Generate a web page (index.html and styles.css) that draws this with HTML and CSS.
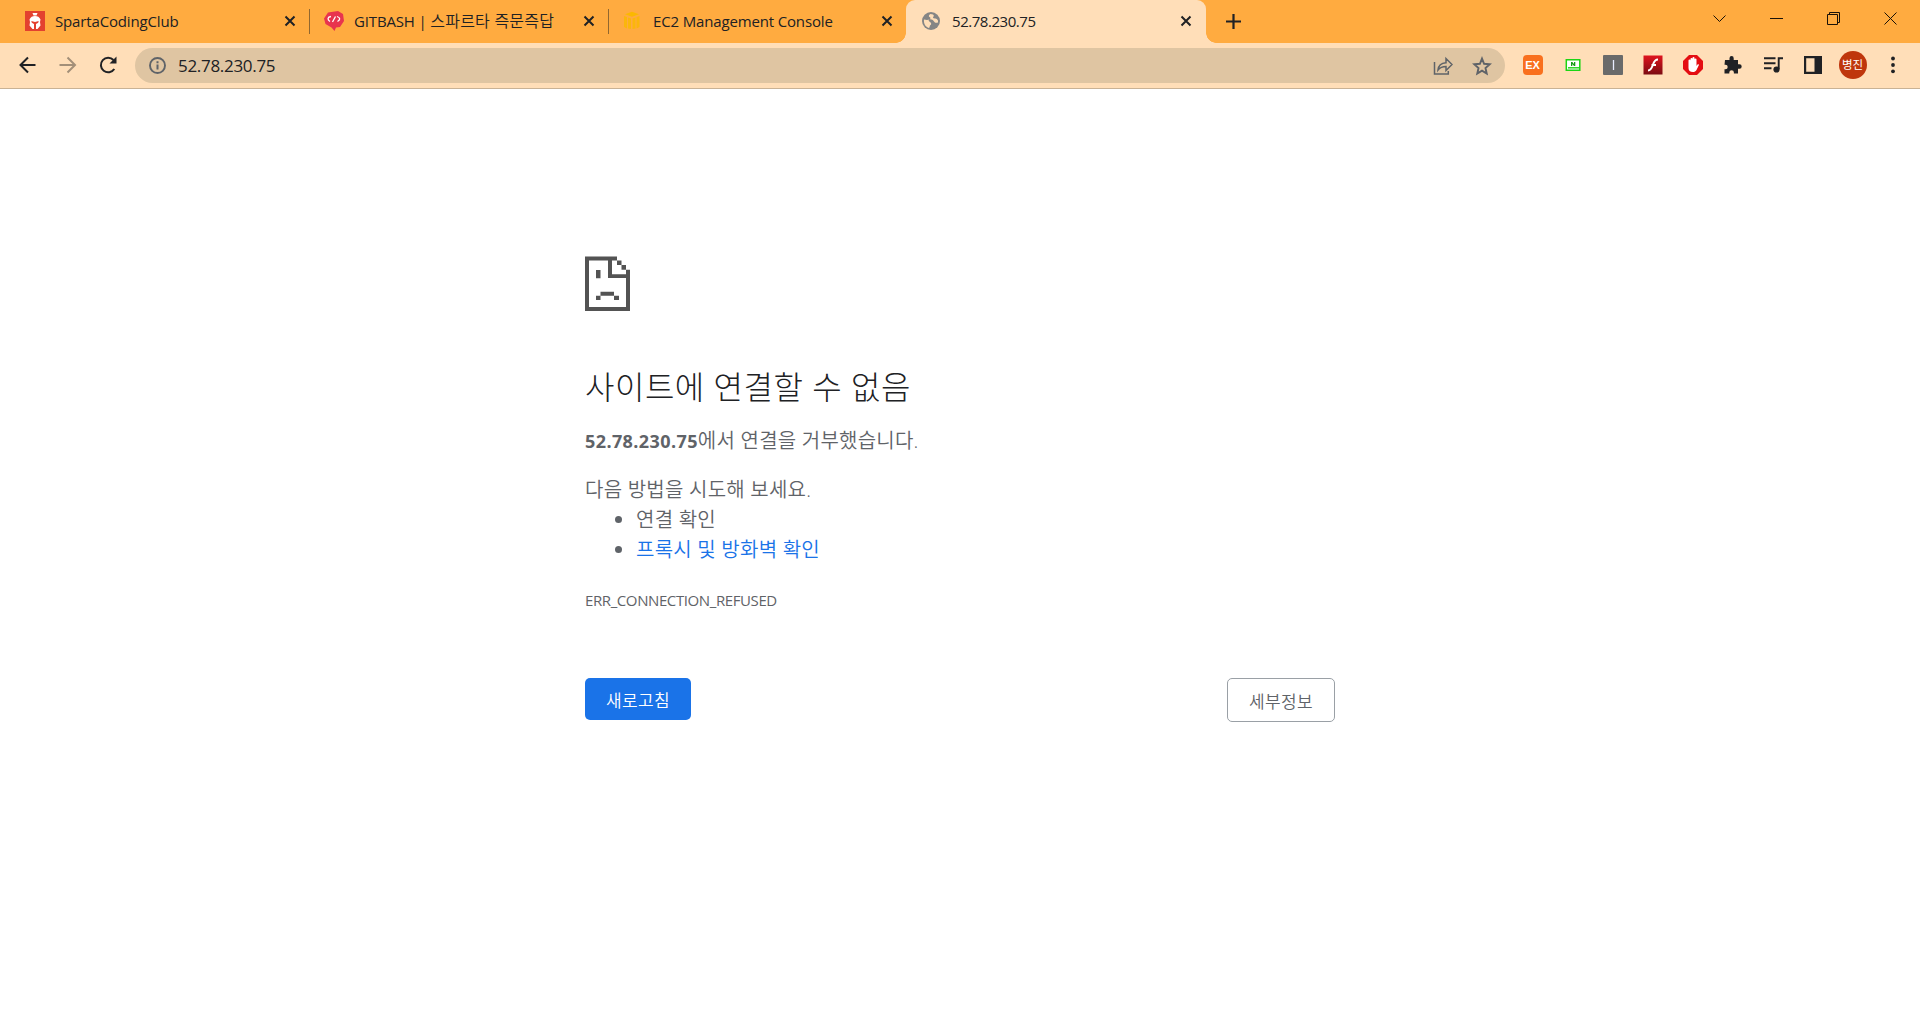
FILE: index.html
```html
<!DOCTYPE html>
<html lang="ko">
<head>
  <meta charset="UTF-8">
  <title>52.78.230.75</title>
  <link rel="stylesheet" href="styles.css">
</head>
<body>
  <header class="tab-strip">
    <div class="tab">
      <svg class="favicon" width="20" height="20" viewBox="0 0 20 20">
        <rect width="20" height="20" fill="#e3412f"/>
        <path d="M7.500 2h5l-1 2.500h-3z" fill="#fff"/>
        <path d="M4.500 8.500C5.500 6 7.500 5 10 5s4.500 1 5.500 3.500l-.5 2.500.5 3.500-3 3.500H7.500l-3-3.500L5 11z" fill="#fff"/>
        <path d="M6.300 10l3.700 1 3.700-1-.5 1.700-2.200 1.300v5H9v-5l-2.200-1.300z" fill="#e3412f"/>
      </svg>
      <span class="tab-title">SpartaCodingClub</span>
      <svg class="close" width="12" height="12" viewBox="0 0 12 12"><path d="M1.500 1.500l9 9M10.500 1.500l-9 9"/></svg>
    </div>
    <div class="tab">
      <svg class="favicon" width="20" height="20" viewBox="0 0 20 20">
        <path d="M4 1.500L14 0l5 3 1 7-4 6-4 .5-1.500 3.500-3-3.500L1.500 13 0 7.500z" fill="#e8344e"/>
        <path d="M7 5.500C3.500 6 3 8.500 6 10.500M13 5.500c3.500 1 3.500 3.500.5 5M11.500 5.500l-3 5.500" fill="none" stroke="#fff" stroke-width="1.300"/>
      </svg>
      <span class="tab-title">GITBASH | <span class="korean">스파르타 즉문즉답</span></span>
      <svg class="close" width="12" height="12" viewBox="0 0 12 12"><path d="M1.500 1.500l9 9M10.500 1.500l-9 9"/></svg>
    </div>
    <div class="tab last">
      <svg class="favicon" width="20" height="20" viewBox="0 0 20 20">
        <path d="M2 3.200l7-2.400 7 2.400-7 2.600z" fill="#fbb800"/>
        <path d="M1 5l3 1v11.500l-3-1.500zM5 6.500l3 1V18l-3-.5zM9.500 7.500l3-1v11l-3 .5zM13.500 6l3-1v11l-3 1.500z" fill="#fbb60c"/>
      </svg>
      <span class="tab-title">EC2 Management Console</span>
      <svg class="close" width="12" height="12" viewBox="0 0 12 12"><path d="M1.500 1.500l9 9M10.500 1.500l-9 9"/></svg>
    </div>
    <div class="tab active">
      <svg class="favicon" width="20" height="20" viewBox="0 0 20 20">
        <circle cx="9" cy="10" r="9" fill="#858585"/>
        <path d="M8.500 3c-2 1-2 2.500-1 3 1.500.5 1 2 0 2.500-1.500.5-3.500.5-5.500 0C1.500 12.500 3.500 16 7 17c1-1 .5-2.500 1.500-3s1-2-.5-3-2-2-.5-2.500 3.500.5 4.500 2 2 1.500 4 1c.5-3-1.500-4-3-4-2 0-2.500-1-1.500-2 .5-.8.300-1.500-.5-2z" fill="#ffdeb8"/>
      </svg>
      <span class="tab-title">52.78.230.75</span>
      <svg class="close" width="12" height="12" viewBox="0 0 12 12"><path d="M1.500 1.500l9 9M10.500 1.500l-9 9"/></svg>
    </div>
    <svg class="new-tab" width="15" height="15" viewBox="0 0 15 15"><path d="M7.500 0v15M0 7.500h15"/></svg>
    <div class="window-controls">
      <svg width="13" height="13" viewBox="0 0 13 13"><path d="M.5 3.500l6 6 6-6"/></svg>
      <svg width="13" height="13" viewBox="0 0 13 13"><path d="M0 6.500h13"/></svg>
      <svg width="13" height="13" viewBox="0 0 13 13"><path d="M.5 2.500h10v10H.5zM2.500 2.500v-2h10v10h-2"/></svg>
      <svg width="13" height="13" viewBox="0 0 13 13"><path d="M.5.5l12 12M12.500.5l-12 12"/></svg>
    </div>
  </header>

  <nav class="toolbar">
    <div class="nav-buttons">
      <svg width="20" height="20" viewBox="0 0 20 20"><path d="M17.500 10H3M10 2.500L2.500 10l7.500 7.500"/></svg>
      <svg class="disabled" width="20" height="20" viewBox="0 0 20 20"><path d="M1.500 10h15M9.500 2.500L17 10l-7.500 7.500"/></svg>
      <svg width="20" height="20" viewBox="0 0 20 20"><path d="M16.300 14A7.300 7.300 0 1 1 15.500 5"/><path d="M18.500 1.500v7h-7z" class="solid"/></svg>
    </div>
    <div class="omnibox">
      <svg width="17" height="17" viewBox="0 0 17 17">
        <circle cx="8.500" cy="8.500" r="7.500" fill="none" stroke="#5f6368" stroke-width="1.900"/>
        <path d="M7.500 7.500h2v5h-2zM7.500 4.200h2v2h-2z" fill="#5f6368"/>
      </svg>
      <span class="url">52.78.230.75</span>
      <svg class="share" width="20" height="20" viewBox="0 0 20 20">
        <path d="M1.500 6v12h13.800v-3M5 14c.4-4 3-7 8-7.300V2.500L19 8.500l-6 6v-4c-4 0-6 1-8 3.500z"/>
      </svg>
      <svg class="star" width="20" height="20" viewBox="0 0 20 20">
        <path d="M10 2.600l2.100 5.200 5.600.5-4.200 3.700 1.200 5.500L10 14.600l-4.700 2.900L6.500 12 2.300 8.300l5.600-.5z"/>
      </svg>
    </div>
    <div class="extensions">
      <span class="ext-ex">EX</span>
      <svg width="20" height="20" viewBox="0 0 20 20">
        <path d="M3.300 4.800h13.500v10.500H3.300z" fill="#fff" stroke="#1cd414" stroke-width="1.500"/>
        <path d="M5 12.800h12" stroke="#1cd414" stroke-width="1.400"/>
        <path d="M8 11V7h1.300l1.700 2V7h1.300v4H11L9.300 9v2z" fill="#159c16"/>
      </svg>
      <svg width="20" height="20" viewBox="0 0 20 20">
        <rect width="20" height="20" rx="1" fill="#6a6a6a"/>
        <path d="M10.500 5v10" stroke="#e8ecff" stroke-width="1.300"/>
      </svg>
      <svg width="20" height="20" viewBox="0 0 20 20">
        <defs><linearGradient id="flash" x2="0" y2="1"><stop stop-color="#e0131d"/><stop offset="1" stop-color="#7b0c12"/></linearGradient></defs>
        <rect x=".5" y=".5" width="19" height="19" fill="url(#flash)"/>
        <path d="M15 4.500c-3 0-4 2-5 5S8 15.500 5 15.500M8.500 10h4.500" fill="none" stroke="#fff" stroke-width="2"/>
      </svg>
      <svg width="20" height="20" viewBox="0 0 20 20">
        <path d="M6 0h8l6 6v8l-6 6H6l-6-6V6z" fill="#e40d12"/>
        <path d="M5.500 10V5.500a1 1 0 0 1 2 0V4a1 1 0 0 1 2 0V3a1 1 0 0 1 2 0v1.500a1 1 0 0 1 2 0V11l1-1.500c.8-.8 1.800 0 1.300.8L13.500 15c-1 1.500-2 2-3.500 2-3 0-4.500-1.500-4.500-4z" fill="#fff"/>
      </svg>
      <svg width="20" height="20" viewBox="0 0 20 20">
        <path d="M2 5h4.500V3.200a2.100 2.100 0 0 1 4.200 0V5H15v4.300h1.500a2.200 2.200 0 0 1 0 4.400H15V18.500h-4.100v-1a2.300 2.300 0 0 0-4.600 0v1H1.500v-4.200h.9a2.300 2.300 0 0 0 0-4.600H1.500z" fill="#202124"/>
      </svg>
      <svg width="20" height="20" viewBox="0 0 20 20">
        <path d="M1 3.300h11.500M1 8.300h11.500M1 13.300h7.500M15.700 14V3.300H20" fill="none" stroke="#202124" stroke-width="1.900"/>
        <circle cx="13.500" cy="14.500" r="3.100" fill="#202124"/>
      </svg>
      <svg width="20" height="20" viewBox="0 0 20 20">
        <path d="M1 1h18v18H1zM3.200 3.200v13.600h8.300V3.200z" fill="#202124" fill-rule="evenodd"/>
      </svg>
      <span class="avatar">병진</span>
      <svg width="20" height="20" viewBox="0 0 20 20" fill="#202124"><circle cx="10" cy="3.500" r="1.900"/><circle cx="10" cy="10" r="1.900"/><circle cx="10" cy="16.300" r="1.900"/></svg>
    </div>
  </nav>

  <main class="error-page">
    <svg class="sad-page" width="45" height="55" viewBox="0 0 45 55">
      <path d="M0 .5h32v4h4.500v4.500H41v4.800h4V55H0zM4 4.500V51h37V22H23V4.500zM27 4.500v13.800h14v-4.500h-4.500V9H32V4.500z" fill="#535353" fill-rule="evenodd"/>
      <path d="M11 14h4.500v8.300H11zM15.500 35.700H29v4H15.500zM11 39.700h4.500V44H11zM29 39.700h5V44h-5z" fill="#535353"/>
    </svg>
    <h1>사이트에 연결할 수 없음</h1>
    <p class="summary"><strong>52.78.230.75</strong>에서 연결을 거부했습니다.</p>
    <p class="try">다음 방법을 시도해 보세요.</p>
    <ul>
      <li>연결 확인</li>
      <li><a href="#">프록시 및 방화벽 확인</a></li>
    </ul>
    <div class="error-code">ERR_CONNECTION_REFUSED</div>
    <div class="buttons">
      <button class="reload">새로고침</button>
      <button class="details">세부정보</button>
    </div>
  </main>
</body>
</html>
```
FILE: styles.css
```css
* {
    margin: 0;
    padding: 0;
    box-sizing: border-box;
}
body {
    background: #fff;
    font-family: "Open Sans", "Noto Sans CJK KR", sans-serif;
    font-weight: 350;
    color: #202124;
}
.tab-strip {
    display: flex;
    height: 43px;
    padding-left: 10px;
    background: #ffab40;
}
.tab {
    position: relative;
    display: flex;
    align-items: center;
    width: 299px;
    padding: 0 13px 1px 15px;
}
.tab::after {
    content: "";
    position: absolute;
    right: -1px;
    top: 9px;
    width: 1px;
    height: 25px;
    background: #91672f;
}
.tab.last {
    width: 298px;
}
.tab.last::after {
    display: none;
}
.favicon {
    flex: none;
    margin-right: 10px;
}
.tab-title {
    font-size: 15px;
    font-weight: 400;
    line-height: 20px;
    letter-spacing: -0.15px;
    white-space: nowrap;
}
.tab-title .korean {
    font-size: 16px;
    font-weight: 350;
    letter-spacing: 0.2px;
}
.close {
    margin-left: auto;
    stroke: #202124;
    stroke-width: 2;
}
.tab.active {
    width: 300px;
    padding: 0 14px 1px 16px;
    background: #ffdeb8;
    border-radius: 9px 9px 0 0;
}
.tab.active .tab-title {
    letter-spacing: -0.45px;
}
.tab.active::before,
.tab.active::after {
    content: "";
    position: absolute;
    top: auto;
    bottom: 0;
    width: 10px;
    height: 10px;
}
.tab.active::before {
    left: -10px;
    background: radial-gradient(circle at 0 0, transparent 9.5px, #ffdeb8 10px);
}
.tab.active::after {
    right: -10px;
    background: radial-gradient(circle at 100% 0, transparent 9.5px, #ffdeb8 10px);
}
.new-tab {
    margin: 14px 0 0 20px;
    stroke: #202124;
    stroke-width: 2.2;
}
.window-controls {
    display: flex;
    gap: 44px;
    margin: 12px 23px 0 auto;
}
.window-controls svg {
    fill: none;
    stroke: #1a1208;
}
.toolbar {
    display: flex;
    align-items: center;
    height: 46px;
    padding: 0 0 1px 18px;
    background: #ffdeb8;
    border-bottom: 1px solid #c9b295;
}
.nav-buttons {
    display: flex;
    gap: 20px;
    width: 117px;
}
.nav-buttons svg {
    fill: none;
    stroke: #202124;
    stroke-width: 2;
}
.nav-buttons .disabled {
    stroke: #a38f78;
}
.nav-buttons .solid {
    fill: #202124;
    stroke: none;
}
.omnibox {
    display: flex;
    align-items: center;
    width: 1370px;
    height: 35px;
    margin-top: 1px;
    padding: 0 13px 0 14px;
    background: #dfc5a2;
    border-radius: 18px;
}
.url {
    margin-left: 12px;
    font-size: 17px;
    font-weight: 400;
    letter-spacing: -0.3px;
}
.share,
.star {
    fill: none;
    stroke: #5f6368;
    stroke-width: 1.5;
}
.share {
    margin-left: auto;
    margin-right: 19px;
}
.star {
    stroke-width: 1.9;
}
.extensions {
    display: flex;
    align-items: center;
    gap: 20px;
    margin-left: 17.5px;
}
.ext-ex {
    width: 20px;
    height: 20px;
    border-radius: 4px;
    background: #f9701e;
    color: #fff;
    font: bold 11px/21px "Liberation Sans", sans-serif;
    text-align: center;
}
.avatar {
    width: 28px;
    height: 28px;
    margin: 0 -4px;
    border-radius: 50%;
    background: #bf360c;
    color: #fff;
    font-size: 11.5px;
    font-weight: 400;
    line-height: 27px;
    text-align: center;
    white-space: nowrap;
}
.error-page {
    width: 750px;
    margin: 0 auto;
    padding-top: 167px;
    color: #5f6368;
    font-size: 20px;
    line-height: 30px;
    letter-spacing: 0.23px;
}
.sad-page {
    display: block;
}
h1 {
    margin-top: 57px;
    color: #202124;
    font-size: 32px;
    font-weight: 300;
    line-height: 38px;
    letter-spacing: 0.5px;
}
.summary {
    margin-top: 20px;
}
.summary strong {
    font-size: 18px;
    font-weight: 700;
    letter-spacing: 0.4px;
}
.try {
    margin-top: 19px;
}
ul {
    padding-left: 51px;
}
a {
    color: #1a73e8;
    text-decoration: none;
}
.error-code {
    margin-top: 20px;
    font-size: 15px;
    font-weight: 400;
    letter-spacing: -0.4px;
}
.buttons {
    display: flex;
    justify-content: space-between;
    align-items: flex-start;
    margin-top: 63px;
}
button {
    font-family: inherit;
    font-size: 17px;
    font-weight: 350;
    letter-spacing: 0.4px;
    border-radius: 5px;
}
.reload {
    width: 106px;
    height: 42px;
    border: none;
    background: #1a73e8;
    color: #fff;
}
.details {
    width: 108px;
    height: 44px;
    border: 1px solid #9aa0a6;
    background: #fff;
    color: #5f6368;
}
```
